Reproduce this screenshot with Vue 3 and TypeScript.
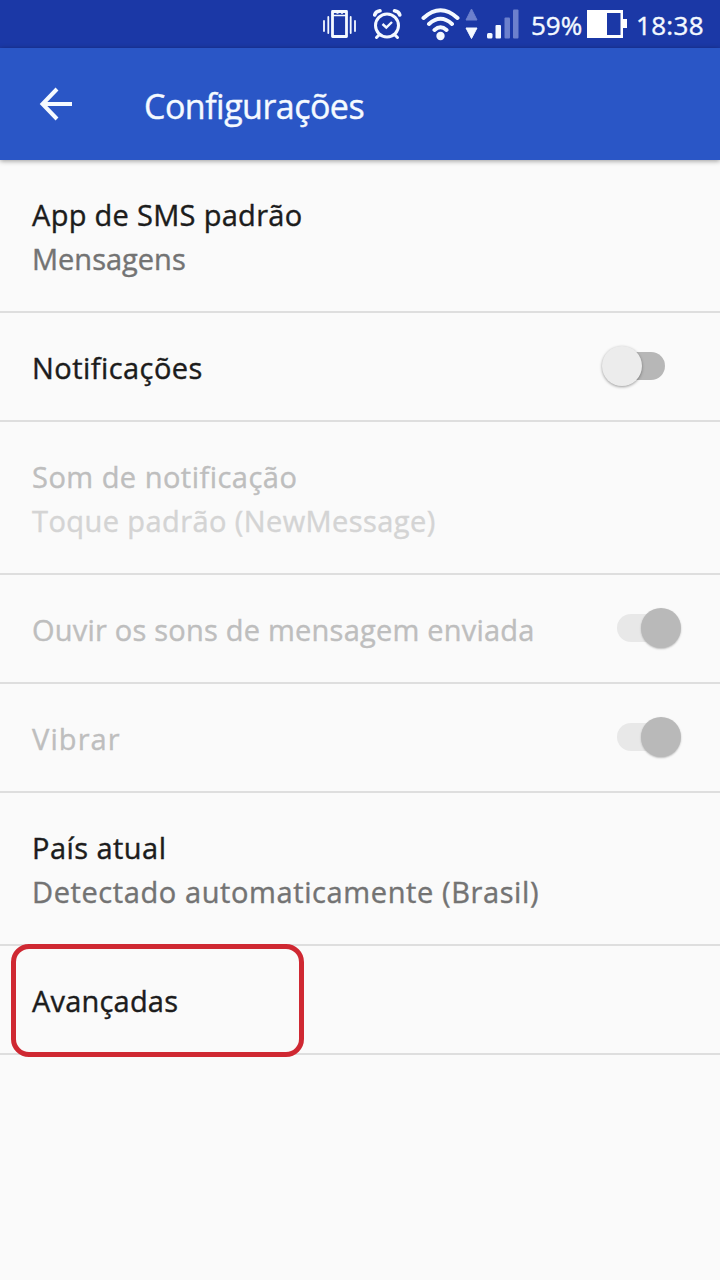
<script setup lang="ts">
interface Row {
  title: string
  summary?: string
  toggle?: 'off' | 'on'
  disabled?: boolean
  highlight?: boolean
  track: number
  subTrack?: number
}

const rows: Row[] = [
  { title: 'App de SMS padrão', summary: 'Mensagens', track: 0.3, subTrack: 0 },
  { title: 'Notificações', toggle: 'off', track: 0.45 },
  { title: 'Som de notificação', summary: 'Toque padrão (NewMessage)', disabled: true, track: 0.48, subTrack: 0.42 },
  { title: 'Ouvir os sons de mensagem enviada', toggle: 'on', disabled: true, track: 0.22 },
  { title: 'Vibrar', toggle: 'on', disabled: true, track: 1.1 },
  { title: 'País atual', summary: 'Detectado automaticamente (Brasil)', track: 0.45, subTrack: 0.6 },
  { title: 'Avançadas', highlight: true, track: 0.2 },
]
</script>

<template>
  <div class="screen">
    <div class="status">
      <svg class="icons" viewBox="0 0 210 48" width="210" height="48" fill="none" stroke="#f4f9ff">
        <path d="M22.500 11.500H36.500V36.500H22.500Z" stroke-width="2.800" stroke-linejoin="round" />
        <path d="M23 15.500H36M26.500 13H28.500M31 13H33" stroke-width="1.500" />
        <path d="M18.300 17V33M40.700 17V33" stroke-width="1.800" stroke-linecap="round" />
        <path d="M14 21V31M45 21V31" stroke-width="1.800" stroke-linecap="round" />
        <circle cx="77" cy="25.500" r="11.500" stroke-width="3" />
        <path d="M72.500 24L76.300 27.500L82 22" stroke-width="2.400" />
        <path d="M64.700 15Q65.500 11.500 70 10.800M89.800 15Q89 11.500 84.500 10.800" stroke-width="3.600" stroke-linecap="round" />
        <path d="M69.500 34.500L66.500 37.500M84.500 34.500L87.500 37.500" stroke-width="3" stroke-linecap="round" />
        <path d="M113.500 18Q130.500 2.500 147.500 18M119 24Q130.500 13.500 142 24M124.500 30Q130.500 24.500 136.500 30" stroke-width="4" stroke-linecap="round" />
        <circle cx="130.500" cy="36" r="4.200" fill="#f4f9ff" stroke="none" />
        <path d="M161.500 9L167 20H156Z" fill="#6c80cd" stroke="#6c80cd" stroke-width="1" stroke-linejoin="round" />
        <path d="M161.500 38.500L156 28H167Z" fill="#f4f9ff" stroke-width="1" stroke-linejoin="round" />
        <g stroke="none">
          <rect x="177" y="33" width="5.500" height="5.500" rx="1.500" fill="#f4f9ff" />
          <rect x="185.500" y="25" width="5.500" height="13.500" rx="1" fill="#f4f9ff" />
          <rect x="194.500" y="17.500" width="5.500" height="21" rx="1" fill="#6c80cd" />
          <rect x="203" y="9.500" width="5.500" height="29" rx="1" fill="#6c80cd" />
        </g>
      </svg>
      <span class="percent">59%</span>
      <svg class="battery" viewBox="0 0 42 30" width="42" height="30">
        <path d="M0 1H36V10H40V19H36V29H0Z" fill="#fff" />
        <rect x="20" y="4" width="13.500" height="22" fill="#1b38a6" />
      </svg>
      <span class="clock">18:38</span>
    </div>
    <header class="bar">
      <svg class="back" viewBox="0 0 34 34" width="34" height="34" fill="none" stroke="#f5faff" stroke-width="4">
        <path d="M18 2L3.500 17L18 32M3.500 17H33" />
      </svg>
      <h1>Configurações</h1>
    </header>
    <main>
      <div v-for="row in rows" :key="row.title" class="row" :class="{ tall: row.summary, disabled: row.disabled }">
        <div class="labels">
          <div class="title"><span :style="{ letterSpacing: row.track + 'px' }">{{ row.title }}</span></div>
          <div v-if="row.summary" class="summary"><span :style="{ letterSpacing: row.subTrack + 'px' }">{{ row.summary }}</span></div>
        </div>
        <div v-if="row.toggle" class="switch" :class="row.toggle"><i class="thumb"></i></div>
        <div v-if="row.highlight" class="outline"></div>
      </div>
    </main>
  </div>
</template>

<style>
body { margin: 0; background: #fafafa; }
</style>

<style scoped>
.screen {
  width: 720px;
  height: 1280px;
  overflow: hidden;
  background: #fafafa;
  font-family: "Open Sans", "Noto Sans", sans-serif;
  -webkit-text-stroke-width: 0.4px;
}
.status {
  display: flex;
  height: 48px;
  padding-left: 310px;
  background: #1b38a6;
  color: #f4f9ff;
  font-size: 26px;
  line-height: 51px;
}
.icons { flex: none; }
.percent { box-sizing: border-box; width: 67px; padding-left: 11px; flex: none; }
.battery { flex: none; margin-top: 9px; }
.clock { padding-left: 7px; letter-spacing: .3px; white-space: nowrap; }
.bar {
  position: relative;
  display: flex;
  align-items: center;
  height: 112px;
  background: #2a56c6;
  box-shadow: 0 1px 5px rgba(0, 0, 0, .4);
}
.back { margin-left: 39px; flex: none; }
h1 {
  margin: 3px 0 0 71px;
  color: #f5faff;
  font-size: 34px;
  font-weight: 400;
  line-height: 44px;
  letter-spacing: -.52px;
  white-space: nowrap;
}
.row {
  position: relative;
  box-sizing: border-box;
  display: flex;
  align-items: center;
  height: 109px;
  padding: 0 38px 0 32px;
  border-bottom: 2px solid #dedede;
}
.tall { height: 153px; }
.labels { flex: 1; padding-top: 2px; }
.title, .summary {
  color: #1c1c1c;
  font-size: 29px;
  line-height: 44px;
  white-space: nowrap;
}
.summary { color: #737373; line-height: 43px; }
.disabled .title { color: #bebebe; }
.disabled .summary { color: #d4d4d4; }
.switch {
  position: relative;
  top: -1px;
  width: 48px;
  height: 28px;
  margin-right: 17px;
  border-radius: 14px;
  background: #b7b7b7;
}
.switch.on { background: #e8e8e8; }
.thumb {
  position: absolute;
  top: -5.5px;
  left: -15.5px;
  width: 40px;
  height: 40px;
  border-radius: 50%;
  background: #ececec;
  box-shadow: 0 1px 3px rgba(0, 0, 0, .38);
}
.on .thumb { left: 24px; background: #b9b9b9; box-shadow: 0 1px 2px rgba(0, 0, 0, .25); }
.outline {
  position: absolute;
  top: -2px;
  left: 11px;
  box-sizing: border-box;
  width: 293px;
  height: 113px;
  border: 5px solid #cf2832;
  border-radius: 18px;
}
</style>
